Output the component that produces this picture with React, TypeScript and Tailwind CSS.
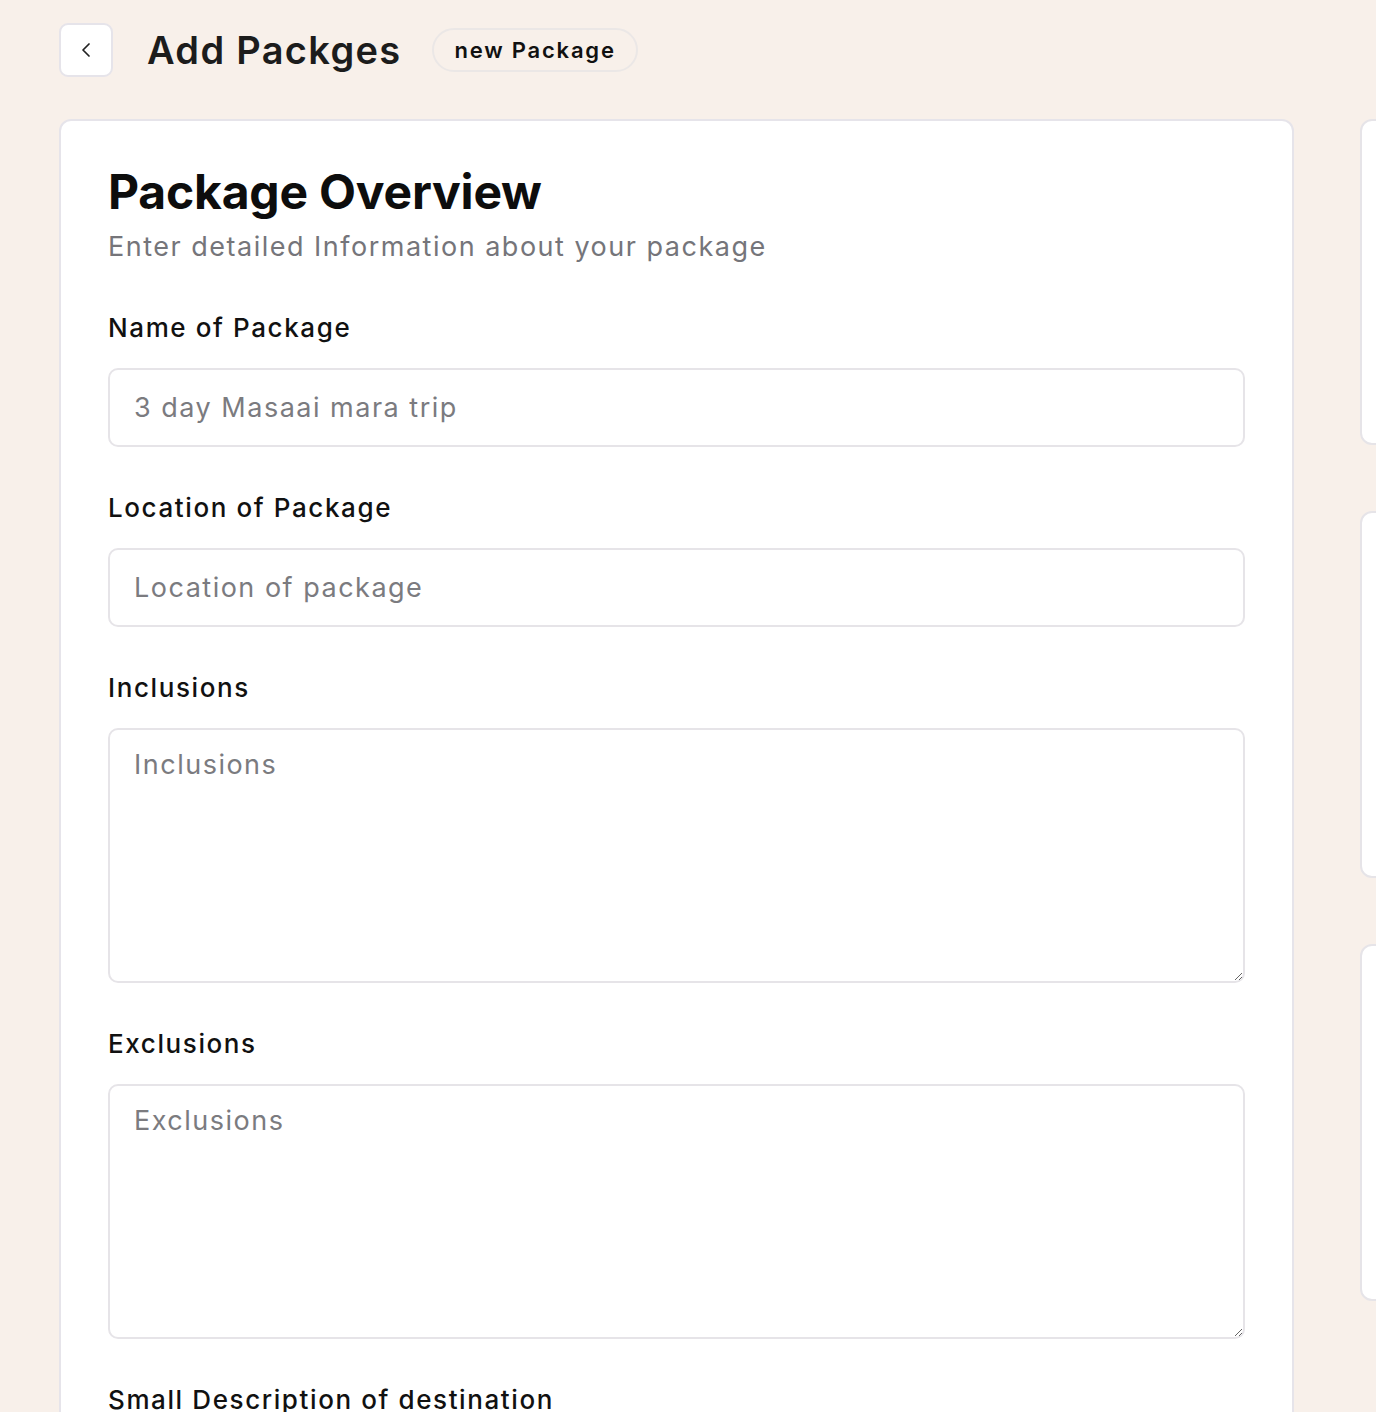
import React from 'react';
import { ChevronLeft } from 'lucide-react';

const font = { fontFamily: 'Inter, "Noto Sans", sans-serif' };

interface FieldProps {
  label: string;
  placeholder: string;
  multiline?: boolean;
}

const Field: React.FC<FieldProps> = ({ label, placeholder, multiline }) => (
  <div className="flex flex-col">
    <label className="text-[26px] leading-[36px] font-medium tracking-[1.6px] text-[#111111] mb-[22px]">{label}</label>
    {multiline ? (
      <textarea
        placeholder={placeholder}
        className="h-[255px] w-full rounded-[10px] border-2 border-[#e6e4e8] bg-white px-[24px] py-[17px] text-[27px] leading-[36px] tracking-[1.5px] text-[#333] placeholder:text-[#7b7b7f] outline-none resize-y"
      />
    ) : (
      <input
        placeholder={placeholder}
        className="h-[79px] w-full rounded-[10px] border-2 border-[#e6e4e8] bg-white px-[24px] text-[27px] tracking-[1.5px] text-[#333] placeholder:text-[#7b7b7f] outline-none"
      />
    )}
  </div>
);

const SideCard: React.FC<{ height: string }> = ({ height }) => (
  <div className={`${height} w-full rounded-[12px] border-2 border-[#e6e4e8] bg-white`} />
);

export default function App() {
  return (
    <div style={font} className="min-h-[1412px] w-full overflow-hidden bg-[#f8f0ea] pl-[59px] pt-[23px]">
      {/* header */}
      <div className="flex items-center h-[54px]">
        <button className="flex h-[54px] w-[54px] items-center justify-center rounded-[9px] border-2 border-[#e6e4ea] bg-white text-[#222]">
          <ChevronLeft size={24} strokeWidth={1.75} />
        </button>
        <h1 className="ml-[34px] text-[38px] font-semibold tracking-[1.3px] text-[#1c1c1c]">Add Packges</h1>
        <span className="ml-[31px] flex h-[44px] items-center rounded-full border-2 border-[#ebe7e6] px-[20px] text-[22px] font-semibold tracking-[1.8px] text-[#111]">
          new Package
        </span>
      </div>

      <div className="mt-[42px] flex gap-[66px]">
        {/* main form */}
        <div className="w-[1235px] shrink-0 rounded-[12px] border-2 border-[#e6e4ea] bg-white px-[47px] pt-[40px] pb-[60px]">
          <h2 className="text-[48px] leading-[62px] font-bold tracking-[-0.2px] text-[#0d0d0d]">Package Overview</h2>
          <p className="mt-[6px] text-[27px] leading-[36px] tracking-[1.5px] text-[#75757a]">Enter detailed Information about your package</p>

          <div className="mt-[45px] flex flex-col gap-[43px]">
            <Field label="Name of Package" placeholder="3 day Masaai mara trip" />
            <Field label="Location of Package" placeholder="Location of package" />
            <Field label="Inclusions" placeholder="Inclusions" multiline />
            <Field label="Exclusions" placeholder="Exclusions" multiline />
            <Field label="Small Description of destination" placeholder="Small description" multiline />
          </div>
        </div>

        {/* side column */}
        <div className="flex w-[420px] shrink-0 flex-col gap-[66px]">
          <SideCard height="h-[326px]" />
          <SideCard height="h-[367px]" />
          <SideCard height="h-[357px]" />
        </div>
      </div>
    </div>
  );
}
